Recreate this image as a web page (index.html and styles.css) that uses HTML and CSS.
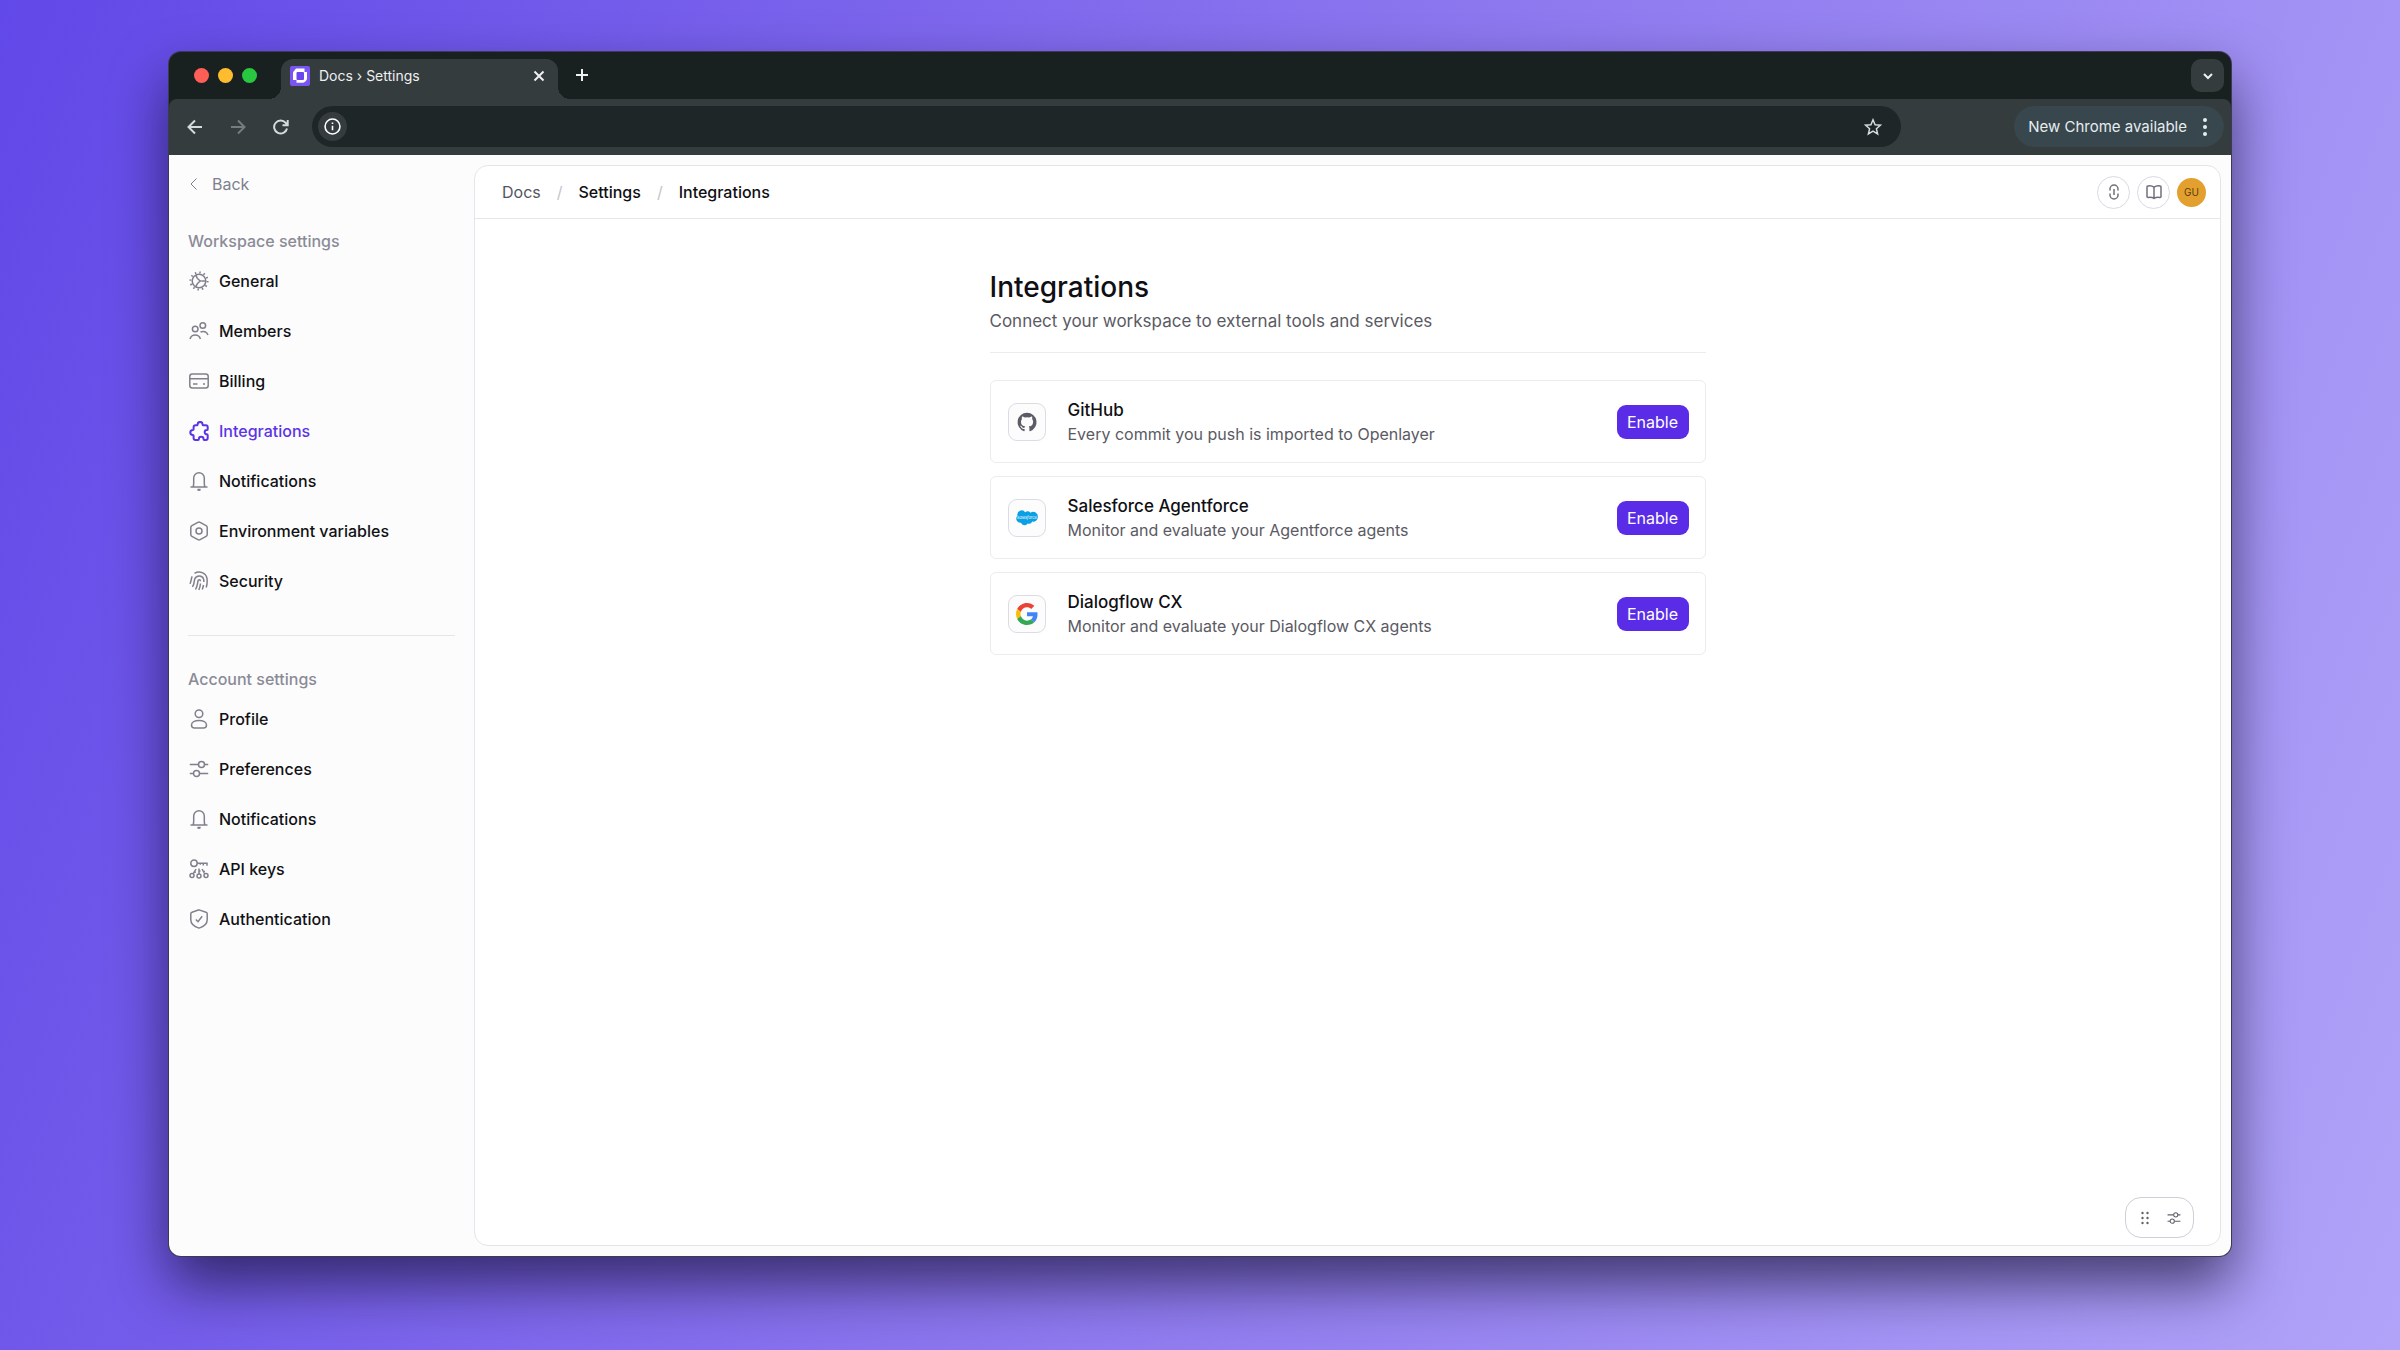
FILE: index.html
```
<!DOCTYPE html>
<html lang="en">
<head>
  <meta charset="UTF-8">
  <meta name="viewport" content="width=device-width, initial-scale=1.0">
  <title>Docs › Settings</title>
  <link rel="stylesheet" href="styles.css">
</head>
<body>
  <!-- shared icons -->
  <svg class="sprite" aria-hidden="true">
    <symbol id="bell" viewBox="0 0 20 20">
      <path d="M1.500 16h17M4 16c.6-1 .7-2.400.7-4V7a5.300 5.300 0 0 1 10.600 0v5c0 1.600.1 3 .7 4"/>
      <path d="M8.500 18.500h3L10 19.300z"/>
    </symbol>
    <symbol id="sliders" viewBox="0 0 20 20">
      <path d="M.8 5.500h8.700M15.500 5.500h3.700M.8 14.500h3.700M10.500 14.500h8.700"/>
      <circle cx="12.500" cy="5.500" r="3"/>
      <circle cx="7.500" cy="14.500" r="3"/>
    </symbol>
  </svg>

  <div class="window">
    <div class="tab-bar">
      <div class="lights">
        <span class="light red"></span>
        <span class="light yellow"></span>
        <span class="light green"></span>
      </div>
      <div class="tab">
        <svg class="favicon" viewBox="0 0 20 20">
          <rect width="20" height="20" rx="2" fill="#7a55f4"/>
          <path fill="#fff" d="M6.500 2.500h8V6H17v6.500c0 .8-.4 1.500-1 2.200l-1 1c-.7.600-1.400 1-2.200 1H6.500V14H3V7.200c0-.9.400-1.600 1-2.200l1.200-1.500c.4-.6.800-1 1.300-1z"/>
          <rect x="6.500" y="6" width="7.500" height="8" rx="1" fill="#6c45ee"/>
        </svg>
        <span class="tab-title">Docs › Settings</span>
        <button class="bare" aria-label="Close tab">
          <svg class="icon-small" viewBox="0 0 12 12"><path d="M1.500 1.500l9 9M10.500 1.500l-9 9"/></svg>
        </button>
      </div>
      <button class="bare new-tab" aria-label="New tab">
        <svg class="icon-small" viewBox="0 0 12 12"><path d="M6 0v12M0 6h12"/></svg>
      </button>
      <button class="tab-search" aria-label="Search tabs">
        <svg class="icon-small" viewBox="0 0 12 12"><path d="M2 4l4 4 4-4"/></svg>
      </button>
    </div>

    <div class="toolbar">
      <button class="bare" aria-label="Go back">
        <svg class="icon-tool" viewBox="0 0 16 16"><path d="M15 8H1.500M8 1.500L1.500 8 8 14.500"/></svg>
      </button>
      <button class="bare disabled" aria-label="Go forward" disabled>
        <svg class="icon-tool" viewBox="0 0 16 16"><path d="M1 8h13.500M8 1.500L14.500 8 8 14.500"/></svg>
      </button>
      <button class="bare" aria-label="Reload">
        <svg class="icon-tool" viewBox="0 0 16 16"><path d="M14 9.500a6.500 6.500 0 1 1-1.300-5.600L14.500 6M14.700 1v5.300H9.500"/></svg>
      </button>
      <div class="omnibox">
        <button class="site-info" aria-label="Site information">
          <svg viewBox="0 0 16 16"><circle cx="8" cy="8" r="7"/><path d="M8 7.200v4.300M8 4.300v1.400"/></svg>
        </button>
        <input type="text" class="address" aria-label="Address">
        <button class="bare" aria-label="Bookmark this tab">
          <svg class="icon-star" viewBox="0 0 18 18"><path d="M9 1.800l2.100 4.900 5.300.5-4 3.500 1.200 5.200L9 13.100l-4.600 2.800 1.200-5.200-4-3.500 5.300-.5z"/></svg>
        </button>
      </div>
      <button class="update">
        New Chrome available
        <svg class="dots" viewBox="0 0 4 18"><circle cx="2" cy="2" r="2"/><circle cx="2" cy="9" r="2"/><circle cx="2" cy="16" r="2"/></svg>
      </button>
    </div>

    <div class="app">
      <aside class="sidebar">
        <a href="#" class="back">
          <svg class="icon-back" viewBox="0 0 12 12"><path d="M8.500.5L3 6l5.500 5.500"/></svg>
          Back
        </a>

        <nav class="nav-group">
          <h2 class="nav-title">Workspace settings</h2>
          <a href="#" class="nav-link">
            <svg class="icon" viewBox="0 0 20 20">
              <circle cx="10" cy="10" r="6.800"/>
              <circle cx="10" cy="10" r="8.600" stroke-width="2" stroke-dasharray="1.500 3.003"/>
              <path d="M12.500 10h4.300M8.700 7.800L6.600 4.100M8.700 12.200l-2.100 3.700"/>
              <path d="M8.700 7.800L11.200 10l-2.500 2.200M11.200 10h1.300"/>
            </svg>
            General
          </a>
          <a href="#" class="nav-link">
            <svg class="icon" viewBox="0 0 20 20">
              <circle cx="6.200" cy="8" r="2.800"/>
              <circle cx="13.800" cy="4.500" r="2.800"/>
              <path d="M1 18c.7-2.500 2.800-4 5.200-4s4.500 1.500 5.200 4M11.500 11c3.300-1.500 6.300-.1 7.500 3"/>
            </svg>
            Members
          </a>
          <a href="#" class="nav-link">
            <svg class="icon" viewBox="0 0 20 20">
              <rect x=".8" y="3" width="18.400" height="14" rx="2.500"/>
              <path d="M1 7.700h18M4 13h4.500M14 13h2"/>
            </svg>
            Billing
          </a>
          <a href="#" class="nav-link active">
            <svg class="icon" viewBox="0 0 20 20">
              <path d="M8.600 3.400a2.500 2.500 0 0 1 5 0c0 .5.300.9.800.9h2.400c1 0 1.900.9 1.900 1.900v2c0 .6-.4.900-.9.900a2.100 2.100 0 0 0 0 4.200c.5 0 .9.400.9.900v2.900c0 1-.9 1.900-1.900 1.900h-1.500c-.5 0-.8-.4-.8-.9a2.300 2.300 0 0 0-4.600 0c0 .5-.3.900-.8.900H6.500c-1 0-1.900-.9-1.900-1.900v-2.300c0-.5-.3-.8-.8-.8a2.500 2.500 0 0 1 0-5c.5 0 .8-.3.800-.8V6.200c0-1 .9-1.900 1.900-1.900h1.300c.5 0 .8-.4.800-.9z"/>
            </svg>
            Integrations
          </a>
          <a href="#" class="nav-link">
            <svg class="icon"><use href="#bell"/></svg>
            Notifications
          </a>
          <a href="#" class="nav-link">
            <svg class="icon" viewBox="0 0 20 20">
              <path d="M8.900 1.400a2.200 2.200 0 0 1 2.200 0l6 3.300c.7.400 1.100 1.100 1.100 1.900v6.800c0 .8-.4 1.500-1.100 1.900l-6 3.300a2.200 2.200 0 0 1-2.200 0l-6-3.300a2.200 2.200 0 0 1-1.100-1.900V6.600c0-.8.400-1.500 1.100-1.900z"/>
              <circle cx="10" cy="10" r="3"/>
            </svg>
            Environment variables
          </a>
          <a href="#" class="nav-link">
            <svg class="icon" viewBox="0 0 20 20">
              <path d="M5.500 2.300C10.500-.8 17 1.800 18 7.500c.4 3 .2 6-.8 9M3.200 5.300C2 7.500 2.500 10 1 12.800M3.500 16c2-3.500 1.500-5.500 2.200-8C7.200 3.800 13.500 3.900 14.600 8c.3 1 .3 2 .2 3M14.500 14c-.3 1.700-.7 3-1.200 4.500M6.500 18.500C8.800 14.500 8.500 12 9 10c.2-1.700 2.500-1.700 2.500.2M11.500 12.500c-.2 2.500-.8 4.500-1.700 6.500"/>
            </svg>
            Security
          </a>
        </nav>

        <hr class="separator">

        <nav class="nav-group">
          <h2 class="nav-title">Account settings</h2>
          <a href="#" class="nav-link">
            <svg class="icon" viewBox="0 0 20 20">
              <circle cx="10" cy="4.700" r="3.800"/>
              <path d="M2.500 16c0-2.800 3.400-4.500 7.500-4.500s7.500 1.700 7.500 4.500c0 2-1.500 3-3 3h-9c-1.500 0-3-1-3-3z"/>
            </svg>
            Profile
          </a>
          <a href="#" class="nav-link">
            <svg class="icon"><use href="#sliders"/></svg>
            Preferences
          </a>
          <a href="#" class="nav-link">
            <svg class="icon"><use href="#bell"/></svg>
            Notifications
          </a>
          <a href="#" class="nav-link">
            <svg class="icon" viewBox="0 0 20 20">
              <circle cx="5" cy="4.200" r="3.200"/>
              <path d="M8.200 4.200H18v2.500M14.300 4.200v2.300M11.300 4.200v1.500"/>
              <circle cx="3" cy="16.500" r="2"/>
              <circle cx="10" cy="17" r="2"/>
              <circle cx="17" cy="16.500" r="2"/>
              <path d="M10 15V9.500M10 12h1.500M4.300 14.700L7 10M5.500 12.800l1.300.7M15.700 14.700L13 10M14.500 12.800l1.300-.7"/>
            </svg>
            API keys
          </a>
          <a href="#" class="nav-link">
            <svg class="icon" viewBox="0 0 20 20">
              <path d="M10 .9l7 2.300c.8.200 1.200.8 1.200 1.600v6c0 4-3.500 7-8.200 8.300-4.700-1.300-8.200-4.300-8.200-8.300v-6c0-.8.400-1.400 1.200-1.600z"/>
              <path d="M6.800 10.500l2.200 2.200L13.200 7.300"/>
            </svg>
            Authentication
          </a>
        </nav>
      </aside>

      <main class="panel">
        <header class="panel-header">
          <nav class="breadcrumb" aria-label="Breadcrumb">
            <a href="#" class="crumb-root">Docs</a>
            <span class="slash">/</span>
            <a href="#">Settings</a>
            <span class="slash">/</span>
            <a href="#">Integrations</a>
          </nav>
          <button class="round" aria-label="Quick actions">
            <svg class="icon-round" viewBox="0 0 16 16"><path d="M4 6.500V5a4 4 0 0 1 8 0v1.500M4 9.500V11a4 4 0 0 0 8 0V9.500M8 5v6"/></svg>
          </button>
          <button class="round" aria-label="Documentation">
            <svg class="icon-round" viewBox="0 0 16 16"><path d="M8 3.200C6 1.700 3.500 1.500 1.800 2c-.5.100-.8.500-.8 1v9.500c0 .6.500 1 1.200.9 2-.4 4-.2 5.800 1.100 1.800-1.300 3.800-1.500 5.800-1.100.7.100 1.200-.3 1.200-.9V3c0-.5-.3-.9-.8-1-1.700-.5-4.200-.3-6.200 1.200zM8 3.200v11"/></svg>
          </button>
          <button class="avatar" aria-label="Account">GU</button>
        </header>

        <div class="content">
          <div class="page-head">
            <h1>Integrations</h1>
            <p>Connect your workspace to external tools and services</p>
          </div>

          <div class="card">
            <div class="logo">
              <svg viewBox="0 0 22 22"><path fill="#5c5c66" d="M11 1.700a9.500 9.500 0 0 0-3 18.500c.5.100.6-.2.600-.5v-1.800c-2.600.6-3.200-1.100-3.200-1.100-.4-1.100-1-1.400-1-1.400-.9-.6.1-.6.100-.6.900.1 1.400 1 1.400 1 .9 1.500 2.200 1.100 2.800.8.100-.6.300-1 .6-1.300-2.100-.2-4.300-1-4.300-4.600 0-1 .4-1.900 1-2.600-.1-.2-.4-1.200.1-2.500 0 0 .8-.3 2.600 1a9 9 0 0 1 4.700 0c1.800-1.200 2.600-1 2.600-1 .5 1.300.2 2.300.1 2.500.6.700 1 1.500 1 2.600 0 3.700-2.200 4.500-4.300 4.700.3.300.6.900.6 1.800v2.500c0 .3.200.6.700.5A9.500 9.500 0 0 0 11 1.700z"/></svg>
            </div>
            <div class="card-text">
              <h3>GitHub</h3>
              <p>Every commit you push is imported to Openlayer</p>
            </div>
            <button class="enable">Enable</button>
          </div>

          <div class="card">
            <div class="logo">
              <svg viewBox="0 0 22 22">
                <path fill="#0b9fe3" d="M9.200 5.200A4 4 0 0 1 14.500 5.700a4.700 4.700 0 0 1 7.300 4.600 4.500 4.500 0 0 1-5.600 4.300 3.400 3.400 0 0 1-4.400 1.900 3.900 3.900 0 0 1-6.800-.7A4.200 4.200 0 0 1 1.500 8.700 4.300 4.300 0 0 1 9.200 5.200z"/>
                <text class="logo-text" x="11" y="12" text-anchor="middle">salesforce</text>
              </svg>
            </div>
            <div class="card-text">
              <h3>Salesforce Agentforce</h3>
              <p>Monitor and evaluate your Agentforce agents</p>
            </div>
            <button class="enable">Enable</button>
          </div>

          <div class="card">
            <div class="logo">
              <svg viewBox="0 0 48 48">
                <path fill="#ea4335" d="M24 9.500c3.540 0 6.710 1.220 9.210 3.600l6.850-6.850C35.900 2.380 30.470 0 24 0 14.620 0 6.510 5.380 2.560 13.220l7.980 6.190C12.430 13.720 17.740 9.500 24 9.500z"/>
                <path fill="#4285f4" d="M46.980 24.550c0-1.570-.15-3.090-.38-4.550H24v9.020h12.940c-.58 2.960-2.260 5.480-4.780 7.180l7.730 6c4.510-4.180 7.090-10.360 7.090-17.650z"/>
                <path fill="#fbbc05" d="M10.530 28.590c-.48-1.450-.76-2.990-.76-4.590s.27-3.140.76-4.590l-7.980-6.190C.92 16.460 0 20.120 0 24c0 3.880.92 7.540 2.560 10.780l7.970-6.190z"/>
                <path fill="#34a853" d="M24 48c6.480 0 11.930-2.130 15.890-5.810l-7.730-6c-2.150 1.450-4.920 2.300-8.160 2.300-6.260 0-11.570-4.220-13.470-9.910l-7.980 6.190C6.510 42.620 14.620 48 24 48z"/>
              </svg>
            </div>
            <div class="card-text">
              <h3>Dialogflow CX</h3>
              <p>Monitor and evaluate your Dialogflow CX agents</p>
            </div>
            <button class="enable">Enable</button>
          </div>
        </div>

        <div class="dock">
          <button class="bare" aria-label="Move">
            <svg class="icon-dock" viewBox="0 0 14 14"><g fill="currentColor" stroke="none"><circle cx="4.500" cy="2" r="1.200"/><circle cx="9.500" cy="2" r="1.200"/><circle cx="4.500" cy="7" r="1.200"/><circle cx="9.500" cy="7" r="1.200"/><circle cx="4.500" cy="12" r="1.200"/><circle cx="9.500" cy="12" r="1.200"/></g></svg>
          </button>
          <button class="bare" aria-label="Options">
            <svg class="icon-dock"><use href="#sliders"/></svg>
          </button>
        </div>
      </main>
    </div>
  </div>
</body>
</html>
```
FILE: styles.css
```
* {
  box-sizing: border-box;
}

body {
  display: flex;
  min-height: 100vh;
  margin: 0;
  padding: 52px 169px 94px;
  font-family: Inter, "Liberation Sans", sans-serif;
  font-size: 16px;
  line-height: 20px;
  color: #0f0f14;
  background: linear-gradient(110deg, #6148e8 0%, #8a74ee 48%, #b0a3f8 100%);
}

h1, h2, h3, p {
  margin: 0;
}

a {
  color: inherit;
  text-decoration: none;
}

button {
  padding: 0;
  border: 0;
  font: inherit;
  color: inherit;
  cursor: pointer;
}

svg {
  display: block;
  flex: none;
  fill: none;
  stroke: currentColor;
  stroke-width: 1.5;
}

.sprite {
  position: absolute;
  width: 0;
  height: 0;
}

.bare {
  display: flex;
  background: none;
}

/* browser window */

.window {
  display: flex;
  flex-direction: column;
  flex: 1;
  border-radius: 12px;
  background: #182020;
  box-shadow: 0 0 0 1px #3d3a55, 0 28px 56px rgba(15, 10, 40, 0.65);
  overflow: hidden;
}

.tab-bar {
  display: flex;
  align-items: flex-end;
  height: 47px;
  padding: 0 7px 0 25px;
  color: #eef0f0;
}

.lights {
  display: flex;
  gap: 9px;
  padding: 0 24px 16px 0;
}

.light {
  width: 15px;
  height: 15px;
  border-radius: 50%;
}

.red {
  background: #ff5f57;
}

.yellow {
  background: #febc2e;
}

.green {
  background: #28c840;
}

.tab {
  position: relative;
  display: flex;
  align-items: center;
  gap: 9px;
  width: 277px;
  height: 40px;
  padding: 0 13px 7px 9px;
  border-radius: 12px 12px 0 0;
  background: #353c3e;
}

.tab::before,
.tab::after {
  content: "";
  position: absolute;
  bottom: 0;
  width: 12px;
  height: 12px;
}

.tab::before {
  right: 100%;
  background: radial-gradient(circle at 0 0, transparent 12px, #353c3e 12px);
}

.tab::after {
  left: 100%;
  background: radial-gradient(circle at 100% 0, transparent 12px, #353c3e 12px);
}

.favicon {
  width: 20px;
  height: 20px;
  stroke: none;
}

.tab-title {
  flex: 1;
  font-size: 14px;
}

.icon-small {
  width: 12px;
  height: 12px;
  stroke-width: 2;
}

.new-tab {
  margin: 0 auto 18px 18px;
}

.tab-search {
  display: flex;
  align-items: center;
  justify-content: center;
  width: 33px;
  height: 33px;
  margin-bottom: 7px;
  border-radius: 10px;
  background: #353c3e;
}

.toolbar {
  display: flex;
  align-items: center;
  height: 56px;
  gap: 27px;
  padding: 0 7px 1px 18px;
  border-radius: 8px 8px 0 0;
  background: #353c3e;
  color: #d5dadb;
}

.icon-tool {
  width: 16px;
  height: 16px;
  stroke-width: 2;
}

.disabled {
  color: #777d7f;
}

.omnibox {
  display: flex;
  align-items: center;
  flex: 1;
  height: 41px;
  margin: 0 86px 0 -4px;
  padding: 0 19px 0 6px;
  border-radius: 21px;
  background: #1e2628;
}

.site-info {
  display: flex;
  align-items: center;
  justify-content: center;
  width: 29px;
  height: 29px;
  border-radius: 50%;
  background: #353c3e;
  color: #fff;
}

.site-info svg {
  width: 17px;
  height: 17px;
}

.address {
  flex: 1;
  border: 0;
  outline: 0;
  font: inherit;
  color: #fff;
  background: none;
}

.icon-star {
  width: 18px;
  height: 18px;
}

.update {
  display: flex;
  align-items: center;
  gap: 16px;
  height: 41px;
  padding: 0 17px 0 14px;
  border-radius: 21px;
  background: #37474d;
  color: #e6edef;
  font-size: 15px;
}

.dots {
  width: 4px;
  height: 18px;
  fill: currentColor;
  stroke: none;
}

/* app */

.app {
  display: flex;
  flex: 1;
  padding: 10px;
  background: #fcfcfd;
}

.sidebar {
  width: 295px;
  padding: 9px 19px 0 9px;
  color: #111114;
}

.back {
  display: flex;
  align-items: center;
  gap: 12px;
  color: #80808c;
}

.icon-back {
  width: 12px;
  height: 12px;
  stroke-width: 1;
}

.nav-title {
  padding-bottom: 5px;
  font-size: 16px;
  font-weight: 500;
  line-height: 20px;
  color: #8b8b97;
}

.back + .nav-group {
  margin-top: 37px;
}

.nav-link {
  display: flex;
  align-items: center;
  gap: 10px;
  height: 50px;
  padding-left: 1px;
  font-weight: 500;
}

.icon {
  width: 20px;
  height: 20px;
  color: #80808c;
}

.active,
.active .icon {
  color: #5b34e6;
}

.active .icon {
  stroke-width: 2;
}

.separator {
  height: 1px;
  margin: 29px 0 33px;
  border: 0;
  background: #e6e6ea;
}

.panel {
  position: relative;
  flex: 1;
  border: 1px solid #e4e4ea;
  border-radius: 14px;
  background: #fff;
}

.panel-header {
  display: flex;
  align-items: center;
  gap: 7px;
  height: 53px;
  padding: 0 14px 0 27px;
  border-bottom: 1px solid #e8e8ec;
}

.breadcrumb {
  display: flex;
  gap: 16px;
  margin-right: auto;
  font-weight: 500;
}

.crumb-root {
  font-weight: 400;
  color: #55555e;
}

.slash {
  color: #c4c4cc;
  font-weight: 400;
}

.round {
  display: flex;
  align-items: center;
  justify-content: center;
  width: 33px;
  height: 33px;
  border: 1px solid #dadae2;
  border-radius: 50%;
  background: #fff;
  color: #70707c;
}

.icon-round {
  width: 16px;
  height: 16px;
}

.avatar {
  width: 29px;
  height: 29px;
  border-radius: 50%;
  background: #e3a02f;
  color: #5a3d08;
  font-size: 10px;
}

.content {
  display: flex;
  flex-direction: column;
  gap: 13px;
  max-width: 716px;
  margin: 49px auto 0;
}

.page-head {
  margin-bottom: 14px;
  padding-bottom: 21px;
  border-bottom: 1px solid #ececf0;
  color: #5a5a63;
}

.page-head h1 {
  margin-bottom: 5px;
  font-size: 28px;
  font-weight: 500;
  line-height: 38px;
  color: #0f0f14;
}

.page-head p {
  font-size: 17px;
}

.card {
  display: flex;
  align-items: center;
  gap: 22px;
  height: 83px;
  padding: 0 16px 0 17px;
  border: 1px solid #ececf0;
  border-radius: 6px;
}

.logo {
  display: flex;
  align-items: center;
  justify-content: center;
  width: 38px;
  height: 38px;
  border: 1px solid #dcdce4;
  border-radius: 9px;
  background: #fcfcfd;
}

.logo svg {
  width: 22px;
  height: 22px;
  stroke: none;
}

.logo-text {
  font-size: 4px;
  font-style: italic;
  fill: #fff;
}

.card-text {
  flex: 1;
}

.card h3 {
  margin-bottom: 4px;
  font-size: 17px;
  font-weight: 500;
}

.card p {
  color: #5a5a63;
}

.enable {
  width: 72px;
  height: 34px;
  border-radius: 9px;
  background: #5a2ce8;
  color: #fff;
}

.dock {
  position: absolute;
  right: 26px;
  bottom: 7px;
  display: flex;
  align-items: center;
  gap: 15px;
  height: 41px;
  padding: 0 12px;
  border: 1px solid #cfcfd8;
  border-radius: 16px;
  background: #fff;
  color: #62626c;
}

.icon-dock {
  width: 14px;
  height: 14px;
}
```
